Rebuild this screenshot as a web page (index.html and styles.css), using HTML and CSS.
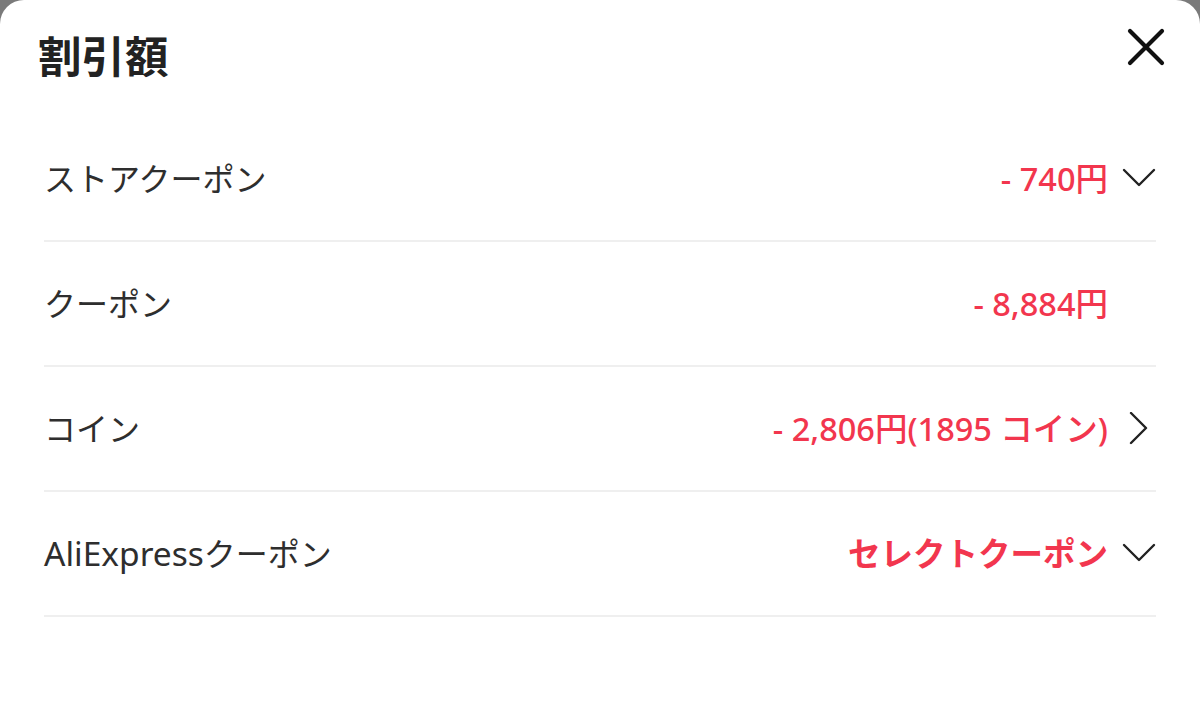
FILE: index.html
```html
<!DOCTYPE html>
<html lang="ja">
<head>
<meta charset="utf-8">
<title>割引額</title>
<link rel="stylesheet" href="styles.css">
</head>
<body>
<div class="sheet">
  <header class="sheet-header">
    <h1 class="title">割引額</h1>
    <button class="close" aria-label="閉じる">
      <svg width="40" height="40" viewBox="0 0 40 40"><path d="M4 4 L36 36 M36 4 L4 36" stroke="#111" stroke-width="4.2" stroke-linecap="round" fill="none"/></svg>
    </button>
  </header>
  <ul class="rows">
    <li class="row">
      <span class="label">ストアクーポン</span>
      <span class="value">- 740円</span>
      <span class="icon"><svg width="34" height="34" viewBox="0 0 34 34"><polyline points="2,8 17,23 32,8" fill="none" stroke="#222" stroke-width="2.4" stroke-linecap="round" stroke-linejoin="round"/></svg></span>
    </li>
    <li class="row">
      <span class="label">クーポン</span>
      <span class="value">- 8,884円</span>
      <span class="icon"></span>
    </li>
    <li class="row">
      <span class="label">コイン</span>
      <span class="value">- 2,806円(1895 コイン)</span>
      <span class="icon"><svg width="34" height="34" viewBox="0 0 34 34"><polyline points="9,1 24,16 9,31" fill="none" stroke="#222" stroke-width="2.4" stroke-linecap="round" stroke-linejoin="round"/></svg></span>
    </li>
    <li class="row">
      <span class="label"><span class="latin">AliExpress</span>クーポン</span>
      <span class="value value-bold">セレクトクーポン</span>
      <span class="icon"><svg width="34" height="34" viewBox="0 0 34 34"><polyline points="2,8 17,23 32,8" fill="none" stroke="#222" stroke-width="2.4" stroke-linecap="round" stroke-linejoin="round"/></svg></span>
    </li>
  </ul>
</div>
</body>
</html>
```
FILE: styles.css
```css
html, body {
  margin: 0;
  padding: 0;
  background: #7a7a7a;
  height: 100%;
}
body {
  font-family: "Noto Sans", "Noto Sans CJK JP", sans-serif;
  color: #2b2b2b;
}
.sheet {
  background: #fff;
  min-height: 703px;
  border-radius: 24px 24px 0 0;
  overflow: hidden;
}
.sheet-header {
  display: flex;
  justify-content: space-between;
  align-items: flex-start;
  height: 117px;
  box-sizing: border-box;
  padding: 0 34px 0 38px;
}
.title {
  margin: 29px 0 0;
  font-family: "Noto Sans CJK JP", sans-serif;
  font-size: 43.5px;
  line-height: 52px;
  font-weight: 700;
  color: #222;
}
.close {
  margin-top: 27px;
  padding: 0;
  border: 0;
  background: none;
  width: 40px;
  height: 40px;
  display: block;
}
.close svg { display: block; }
.rows {
  list-style: none;
  margin: 0;
  padding: 0 44px;
}
.row {
  display: flex;
  align-items: center;
  height: 123px;
  border-bottom: 2px solid #efefef;
}
.label {
  flex: 1;
  font-size: 32px;
  line-height: 44px;
  color: #2e2e2e;
}
.latin {
  font-size: 33.5px;
}
.value {
  font-size: 32.5px;
  line-height: 44px;
  font-weight: 500;
  color: #f2364e;
}
.value-bold { font-weight: 700; }
.icon {
  width: 34px;
  height: 34px;
  margin-left: 14px;
  flex: none;
}
.icon svg { display: block; }
```
